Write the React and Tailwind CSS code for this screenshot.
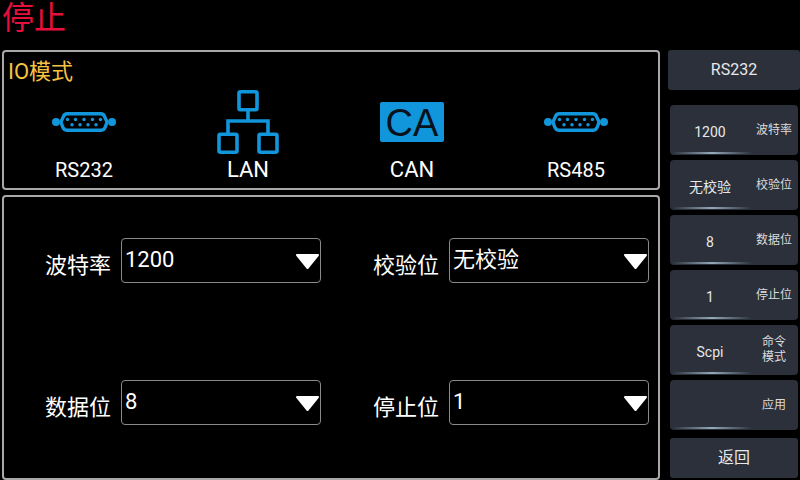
import React from 'react';

const DSub = () => (
  <svg width="64" height="20" viewBox="0 0 64 20" fill="none">
    <circle cx="4" cy="10" r="4" fill="#1296db" />
    <circle cx="60" cy="10" r="4" fill="#1296db" />
    <path d="M11.5 4.5 Q12.2 1.7 15.5 1.7 H48.5 Q51.8 1.7 52.5 4.5 L54.6 9 Q55 10 54.6 11.5 L53 15.5 Q52 18.3 48.5 18.3 H15.5 Q12 18.3 11 15.5 L9.4 11.5 Q9 10 9.4 9 Z" stroke="#1296db" strokeWidth="3.4" fill="#000" />
    {[15.5, 23.5, 32, 40.5, 48.5].map((x) => (
      <circle key={x} cx={x} cy="7.5" r="1.7" fill="#1296db" />
    ))}
    {[20, 28, 36, 44].map((x) => (
      <circle key={x} cx={x} cy="12.7" r="1.7" fill="#1296db" />
    ))}
  </svg>
);

const Network = () => (
  <svg width="62" height="64" viewBox="0 0 62 64" fill="none" stroke="#1296db" strokeWidth="3.6">
    <rect x="22" y="1.8" width="18" height="18" rx="1.5" />
    <rect x="2" y="44.2" width="18" height="18" rx="1.5" />
    <rect x="42" y="44.2" width="18" height="18" rx="1.5" />
    <path d="M31 20 V31 M11 44 V31 H51 V44" />
  </svg>
);

const Caret = () => (
  <svg className="absolute right-0 top-[14px]" width="25" height="17" viewBox="0 0 25 17" fill="#fff" stroke="#fff" strokeWidth="2" strokeLinejoin="round">
    <path d="M2 2 H23 L12.5 15 Z" />
  </svg>
);

const ModeItem = ({ label, large, children }) => (
  <div className="flex-1 flex flex-col items-center">
    <div className="h-[74px] flex items-center justify-center">{children}</div>
    <div className={`-mt-[1px] leading-[24px] text-white ${large ? 'text-[22px]' : 'text-[20px]'}`}>{label}</div>
  </div>
);

const Field = ({ label, value }) => (
  <div className="flex items-center">
    <div className="w-[76px] pt-[10px] text-[22px] leading-[28px] text-white text-right pr-[10px]">{label}</div>
    <div className="relative w-[200px] h-[45px] rounded-[4px] border border-[#8a8a8a] pl-[3px] text-[22px] leading-[42px] text-white">
      {value}
      <Caret />
    </div>
  </div>
);

const SideButton = ({ value, label }) => (
  <div className="relative w-[128px] h-[50px] rounded-[4px] bg-[#2b303b] flex items-center text-white">
    <div className="w-[80px] pt-[4px] text-center text-[14px] leading-[18px] text-[#e8e8e8]">{value}</div>
    <div className="flex-1 text-center text-[12px] leading-[15px] text-[#dcdcdc]">{label}</div>
    <div className="absolute left-[2px] bottom-[1px] w-[80px] h-[2px] bg-gradient-to-r from-transparent via-[#93a8b8] to-transparent" />
  </div>
);

export default function App() {
  return (
    <div className="w-[800px] h-[480px] bg-black flex overflow-hidden font-['Roboto','Noto_Sans_CJK_SC',sans-serif]">
      <div className="w-[668px] pl-[2px] flex flex-col">
        <div className="h-[50px] shrink-0 text-[32px] leading-[36px] text-[#e6103c]">停止</div>

        <div className="w-[658px] h-[140px] shrink-0 rounded-[4px] border-2 border-[#a8a8a8] pt-[5px]">
          <div className="h-[28px] pl-[4px] text-[22px] leading-[30px] text-[#f5c242]">IO模式</div>
          <div className="flex w-[656px] -ml-[2px]">
            <ModeItem label="RS232"><DSub /></ModeItem>
            <ModeItem label="LAN" large><Network /></ModeItem>
            <ModeItem label="CAN" large>
              <div className="w-[64px] h-[40px] rounded-[2px] bg-[#1296db] text-center font-['Liberation_Sans',sans-serif] text-[38px] leading-[42px] text-[#06121c]">CA</div>
            </ModeItem>
            <ModeItem label="RS485"><DSub /></ModeItem>
          </div>
        </div>

        <div className="mt-[5px] w-[658px] h-[285px] shrink-0 rounded-[4px] border-2 border-[#a8a8a8] pl-[41px] pt-[41px]">
          <div className="grid grid-cols-[328px_276px] gap-y-[97px]">
            <Field label="波特率" value="1200" />
            <Field label="校验位" value="无校验" />
            <Field label="数据位" value="8" />
            <Field label="停止位" value="1" />
          </div>
        </div>
      </div>

      <div className="w-[132px] pt-[50px] flex flex-col items-center">
        <div className="w-[132px] h-[40px] shrink-0 rounded-[3px] bg-[#2b303b] text-center text-[16px] leading-[40px] text-[#e8e8e8]">RS232</div>
        <div className="mt-[15px] flex flex-col gap-[5px]">
          <SideButton value="1200" label="波特率" />
          <SideButton value="无校验" label="校验位" />
          <SideButton value="8" label="数据位" />
          <SideButton value="1" label="停止位" />
          <SideButton value="Scpi" label={<>命令<br />模式</>} />
          <SideButton value="" label="应用" />
        </div>
        <div className="mt-[8px] w-[128px] h-[40px] shrink-0 rounded-[3px] bg-[#2b303b] text-center text-[16px] leading-[40px] text-[#e8e8e8]">返回</div>
      </div>
    </div>
  );
}
